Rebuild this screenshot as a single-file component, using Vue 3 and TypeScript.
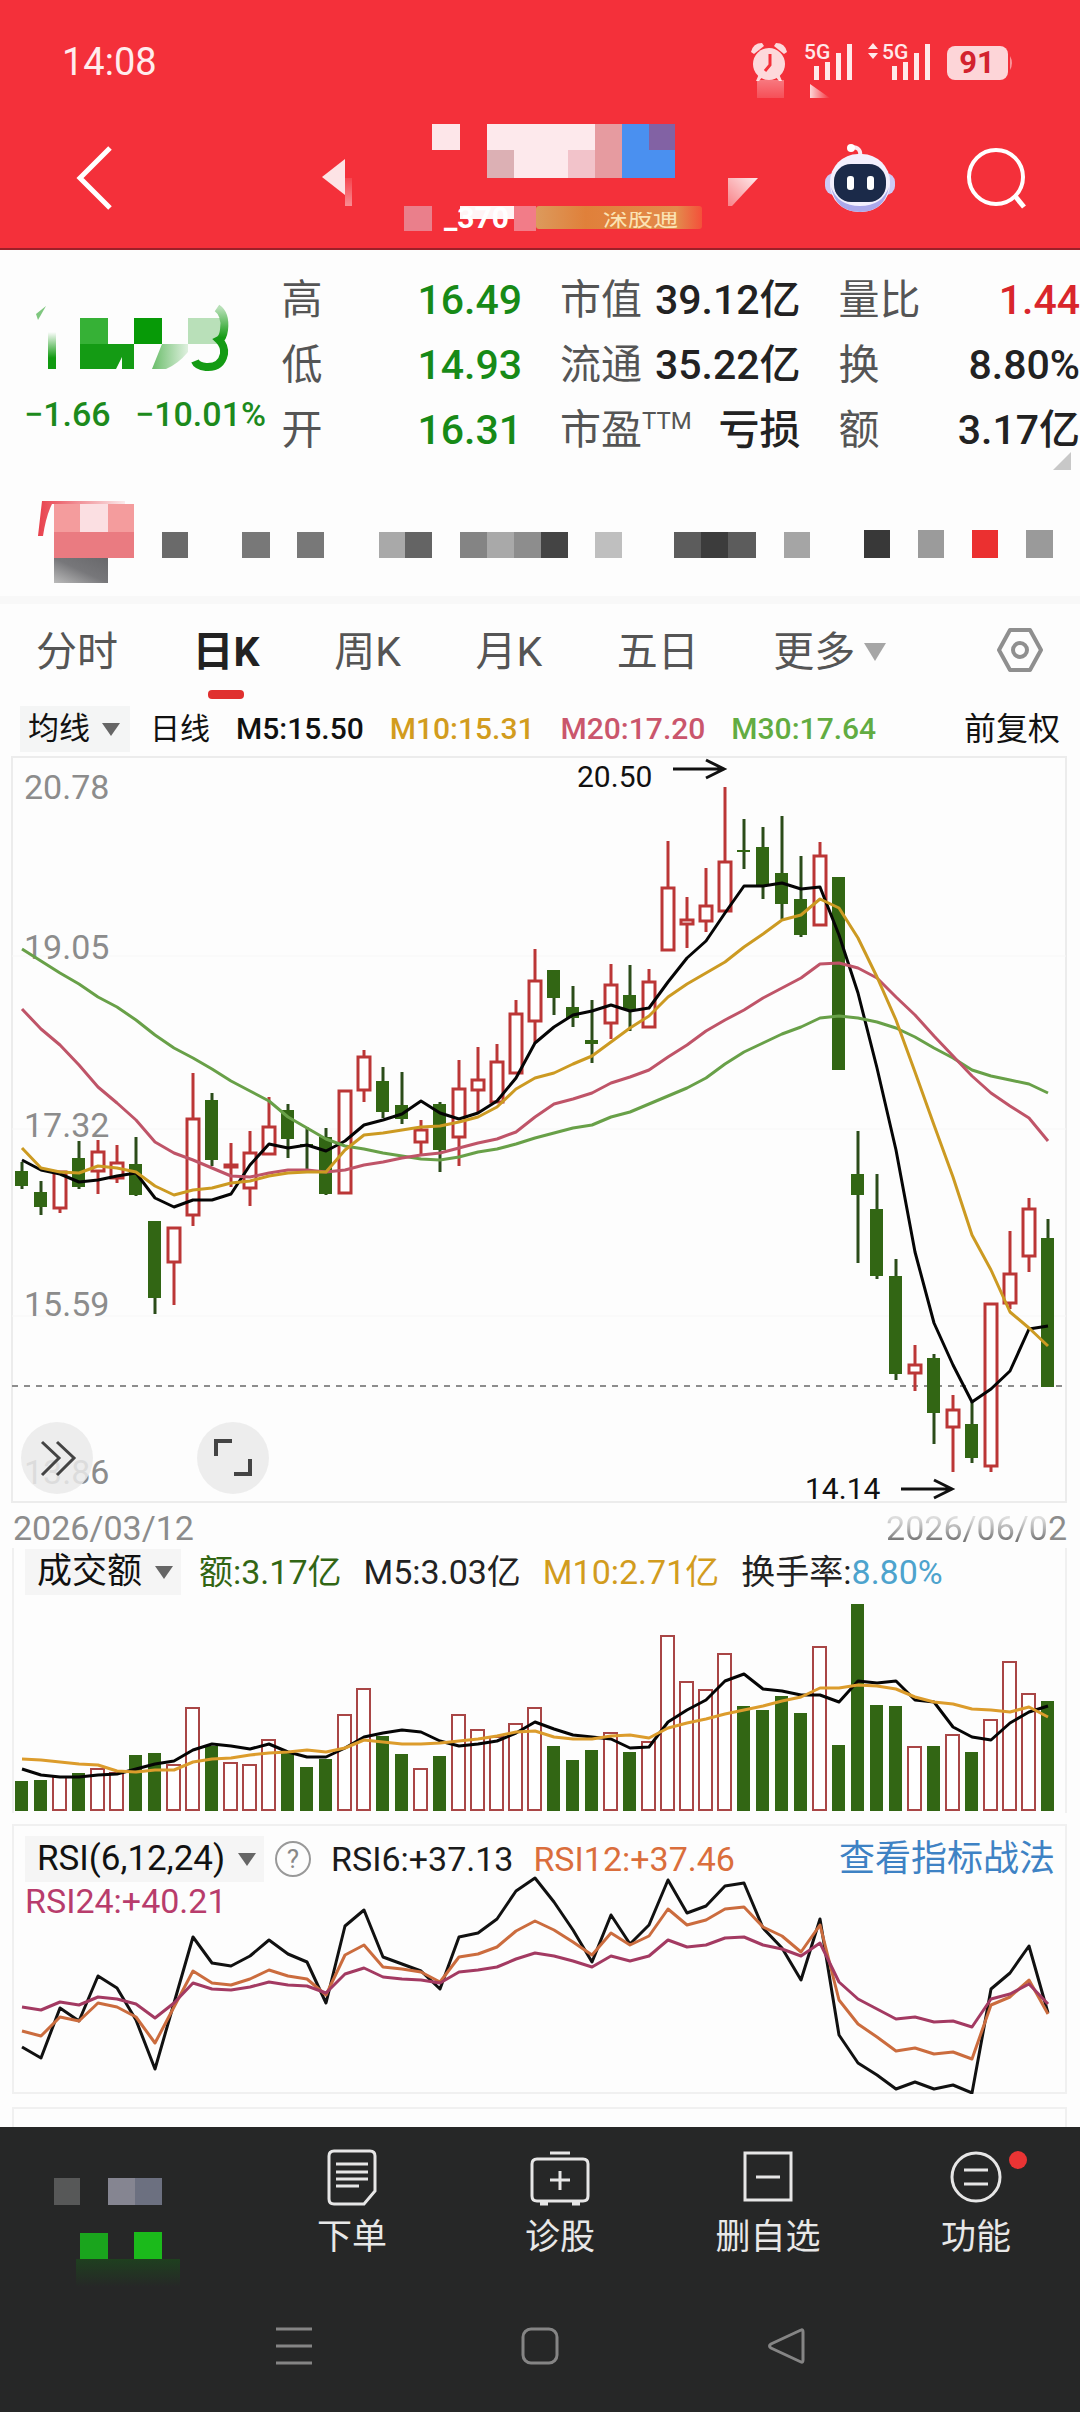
<script setup lang="ts">
import { ref } from 'vue'

type Row = { label: string; sup?: string; value: string; tone: string }
type Block = [x: number, y: number, w: number, h: number, fill: string]
type Candle = [high: number, top: number, bottom: number, low: number, up: 0 | 1]

const groups: Row[][] = [
  [
    { label: '高', value: '16.49', tone: 'down' },
    { label: '低', value: '14.93', tone: 'down' },
    { label: '开', value: '16.31', tone: 'down' },
  ],
  [
    { label: '市值', value: '39.12亿', tone: 'plain' },
    { label: '流通', value: '35.22亿', tone: 'plain' },
    { label: '市盈', sup: 'TTM', value: '亏损', tone: 'plain' },
  ],
  [
    { label: '量比', value: '1.44', tone: 'up' },
    { label: '换', value: '8.80%', tone: 'plain' },
    { label: '额', value: '3.17亿', tone: 'plain' },
  ],
]

const tabs = ['分时', '日K', '周K', '月K', '五日']
const activeTab = ref('日K')

const titleBlocks: Block[] = [
  [110, 6, 28, 26, '#fde6e9'],
  [165, 6, 108, 54, '#fde9ec'],
  [165, 32, 27, 28, '#dcb0b4'],
  [246, 32, 27, 28, '#f2c3ca'],
  [273, 6, 27, 54, '#e69ba0'],
  [300, 6, 53, 54, '#4a90f0'],
  [327, 6, 26, 26, '#8262a4'],
  [82, 88, 28, 25, '#ea7f8b'],
]

const newsBlocks: Block[] = [
  [54, 8, 80, 28, '#f49c9d'],
  [80, 8, 28, 28, '#fbdfe2'],
  [54, 36, 80, 26, '#ea7b81'],
  [162, 36, 26, 26, '#6a6a6a'],
  [242, 36, 28, 26, '#787878'],
  [297, 36, 27, 26, '#787878'],
  [379, 36, 26, 26, '#a9a9a9'],
  [405, 36, 27, 26, '#646464'],
  [460, 36, 27, 26, '#848484'],
  [487, 36, 27, 26, '#a9a9a9'],
  [514, 36, 27, 26, '#8d8d8d'],
  [541, 36, 27, 26, '#444444'],
  [595, 36, 27, 26, '#bfbfbf'],
  [674, 36, 27, 26, '#5c5c5c'],
  [701, 36, 27, 26, '#3c3c3c'],
  [728, 36, 28, 26, '#5c5c5c'],
  [784, 36, 26, 26, '#a5a5a5'],
  [864, 34, 26, 28, '#383838'],
  [918, 34, 26, 28, '#9b9b9b'],
  [972, 34, 26, 28, '#eb3030'],
  [1026, 34, 27, 28, '#9a9a9a'],
]

const candles: Candle[] = [
  [406, 415, 430, 433, 0], [425, 436, 451, 459, 0], [415, 415, 452, 457, 1], [385, 402, 431, 433, 0],
  [384, 395, 415, 438, 1], [389, 406, 422, 427, 1], [381, 408, 439, 440, 0], [465, 465, 542, 558, 0],
  [471, 471, 506, 549, 1], [317, 362, 459, 470, 1], [337, 344, 404, 410, 0], [387, 408, 411, 431, 1],
  [375, 396, 432, 450, 1], [341, 370, 398, 398, 1], [348, 354, 383, 402, 0], [371, 388, 390, 413, 0],
  [372, 381, 438, 439, 0], [334, 334, 437, 437, 1], [294, 300, 334, 346, 1], [311, 325, 356, 362, 0],
  [316, 349, 363, 368, 0], [364, 373, 386, 399, 1], [346, 348, 394, 416, 0], [304, 332, 381, 410, 1],
  [291, 323, 334, 357, 1], [288, 305, 346, 346, 1], [244, 257, 317, 317, 1], [193, 224, 265, 287, 1],
  [214, 214, 242, 259, 0], [230, 251, 262, 271, 0], [244, 284, 288, 307, 0], [208, 228, 267, 283, 1],
  [209, 239, 254, 275, 0], [213, 225, 271, 272, 1], [85, 131, 194, 194, 1], [141, 163, 168, 192, 1],
  [112, 149, 165, 176, 1], [31, 105, 155, 155, 1], [63, 94, 96, 113, 0], [71, 91, 129, 143, 0],
  [60, 117, 148, 163, 0], [100, 143, 179, 181, 0], [86, 99, 169, 169, 1], [121, 121, 314, 314, 0],
  [375, 418, 439, 507, 0], [418, 453, 520, 523, 0], [503, 520, 618, 624, 0], [589, 608, 617, 635, 1],
  [598, 602, 657, 688, 0], [639, 653, 671, 716, 1], [646, 668, 702, 707, 0], [547, 547, 710, 716, 1],
  [475, 517, 547, 553, 1], [442, 452, 500, 516, 1], [463, 482, 631, 631, 0],
]

const ma5 = [404, 414, 418, 426, 424, 420, 417, 442, 451, 444, 444, 438, 409, 388, 392, 389, 395, 385, 369, 364, 358, 345, 357, 363, 357, 345, 322, 287, 271, 259, 255, 249, 255, 252, 226, 202, 185, 157, 130, 130, 127, 133, 131, 179, 237, 312, 394, 496, 567, 609, 646, 633, 615, 573, 570]
const ma10 = [392, 412, 416, 417, 410, 412, 416, 430, 439, 434, 432, 427, 425, 420, 417, 416, 416, 394, 379, 377, 374, 371, 370, 366, 361, 351, 333, 322, 317, 308, 300, 286, 272, 260, 241, 228, 217, 206, 191, 178, 164, 159, 143, 152, 182, 221, 264, 316, 369, 421, 479, 514, 556, 572, 590]
const ma20 = [253, 273, 289, 309, 331, 347, 364, 386, 397, 404, 412, 420, 421, 417, 414, 414, 416, 414, 409, 406, 402, 399, 397, 392, 387, 383, 376, 361, 348, 343, 337, 327, 321, 314, 301, 289, 275, 264, 254, 242, 232, 222, 208, 207, 212, 222, 241, 259, 280, 300, 320, 337, 350, 362, 385]
const ma30 = [193, 205, 217, 228, 241, 251, 264, 279, 292, 302, 313, 325, 335, 345, 361, 372, 383, 390, 393, 397, 400, 403, 404, 401, 396, 393, 388, 382, 377, 372, 369, 361, 356, 348, 340, 332, 322, 308, 296, 287, 278, 271, 262, 260, 262, 266, 272, 281, 292, 302, 314, 320, 324, 328, 337]

const volumes = [181, 180, 177, 173, 169, 173, 155, 153, 165, 108, 146, 163, 165, 140, 153, 167, 159, 115, 89, 136, 154, 169, 156, 115, 130, 137, 124, 108, 146, 160, 150, 133, 152, 142, 36, 82, 90, 54, 106, 110, 96, 113, 47, 145, 4, 105, 106, 147, 146, 135, 152, 120, 62, 94, 101]
const vol5 = [169, 175, 177, 177, 175, 174, 169, 164, 161, 150, 144, 146, 149, 144, 152, 157, 157, 148, 137, 133, 130, 132, 141, 146, 144, 141, 133, 122, 129, 135, 137, 139, 148, 147, 122, 110, 100, 81, 74, 89, 91, 95, 95, 102, 81, 83, 81, 100, 102, 127, 137, 140, 123, 112, 106]
const vol10 = [159, 160, 162, 164, 165, 171, 172, 170, 170, 162, 159, 158, 155, 153, 152, 150, 152, 148, 140, 142, 144, 144, 143, 141, 139, 136, 132, 131, 137, 139, 139, 136, 135, 138, 128, 123, 119, 114, 110, 106, 101, 97, 88, 88, 85, 86, 89, 97, 102, 104, 109, 110, 112, 107, 117]

const rsi6 = [223, 234, 184, 197, 152, 164, 196, 245, 179, 113, 139, 142, 132, 116, 130, 138, 179, 102, 86, 133, 140, 147, 165, 113, 109, 95, 67, 54, 78, 106, 138, 91, 120, 101, 56, 89, 82, 62, 59, 104, 124, 156, 95, 211, 239, 251, 265, 258, 265, 261, 269, 165, 149, 122, 189]
const rsi12 = [207, 212, 193, 197, 179, 183, 193, 219, 183, 147, 159, 161, 155, 146, 152, 155, 171, 131, 121, 143, 145, 148, 158, 133, 130, 123, 107, 97, 106, 118, 131, 109, 121, 112, 85, 101, 96, 85, 83, 103, 112, 128, 101, 176, 200, 213, 227, 224, 230, 228, 235, 181, 173, 156, 190]
const rsi24 = [183, 186, 178, 181, 173, 175, 180, 194, 179, 159, 165, 166, 163, 158, 161, 162, 169, 150, 144, 153, 155, 156, 159, 148, 146, 143, 135, 129, 132, 137, 143, 132, 137, 132, 116, 123, 121, 114, 113, 121, 125, 132, 119, 158, 175, 185, 195, 193, 198, 197, 203, 175, 170, 160, 180]

const axis = [
  { y: 43, text: '20.78' },
  { y: 203, text: '19.05' },
  { y: 381, text: '17.32' },
  { y: 560, text: '15.59' },
  { y: 728, text: '13.86' },
]

const xAt = (i: number): number => 22 + 19 * i
const line = (ys: number[]): string => ys.map((y, i) => `${xAt(i)},${y}`).join(' ')
</script>

<template>
  <div class="app">
    <header class="top">
      <div class="status">
        <span class="clock">14:08</span>
        <svg class="status-icons" viewBox="0 0 264 60" aria-hidden="true">
          <defs>
            <linearGradient id="smear" x1="0" y1="0" x2="0" y2="1">
              <stop offset="0" stop-color="#fff" stop-opacity=".35" />
              <stop offset="1" stop-color="#fff" stop-opacity=".15" />
            </linearGradient>
            <linearGradient id="smearSide" x1="0" y1="0" x2="1" y2="0">
              <stop offset="0" stop-color="#fff" stop-opacity=".8" />
              <stop offset="1" stop-color="#fff" stop-opacity="0" />
            </linearGradient>
          </defs>
          <g fill="#fdd9db">
            <circle cx="19" cy="24" r="16" />
            <path d="M1 12Q3 3 12 3L14 6L4 14ZM37 12Q35 3 26 3L24 6L34 14Z" />
            <path d="M9 34l-3 7h3l4-5zM29 34l3 7h-3l-4-5z" />
          </g>
          <path d="M20 14v11l-5 6" fill="none" stroke="#f4303a" stroke-width="3" />
          <rect x="7" y="40" width="27" height="18" fill="url(#smear)" />
          <path d="M60 44l20 14h-20z" fill="url(#smearSide)" />
          <g fill="#ffe9ea">
            <text class="net" x="54" y="19">5G</text>
            <path d="M64 26h5v14h-5zM75 22h5v18h-5zM86 13h5v27h-5zM97 4h5v36h-5z" />
            <path d="M118 9l5-6 5 6zM118 13l5 6 5-6z" />
            <text class="net" x="132" y="19">5G</text>
            <path d="M142 26h5v14h-5zM153 22h5v18h-5zM164 13h5v27h-5zM175 4h5v36h-5z" />
          </g>
          <rect x="197" y="6" width="61" height="34" rx="8" fill="#fdd5d8" />
          <path d="M260 16q4 7 0 14z" fill="#fdd5d8" opacity=".6" />
          <text class="battery" x="227" y="33">91</text>
        </svg>
      </div>

      <div class="title-row">
        <button class="icon-btn" aria-label="返回">
          <svg width="44" height="72" viewBox="0 0 44 72"><path d="M38 6L8 36L38 66" fill="none" stroke="#fff" stroke-width="5" /></svg>
        </button>
        <div class="stock-name">
          <svg viewBox="0 0 436 120" width="436" height="120" aria-hidden="true">
            <defs>
              <linearGradient id="fadeDown" x1="0" y1="0" x2="0" y2="1">
                <stop offset="0" stop-color="#fff" stop-opacity=".1" />
                <stop offset="1" stop-color="#fff" stop-opacity=".45" />
              </linearGradient>
              <linearGradient id="fadeCorner" x1="1" y1="0" x2="0" y2="1">
                <stop offset="0" stop-color="#fff" stop-opacity=".9" />
                <stop offset="1" stop-color="#fff" stop-opacity=".4" />
              </linearGradient>
              <linearGradient id="tagFill" x1="0" y1="0" x2="1" y2="0">
                <stop offset="0" stop-color="#dc9a5c" />
                <stop offset=".3" stop-color="#e0803a" />
                <stop offset=".85" stop-color="#e38a4c" />
                <stop offset="1" stop-color="#f4503a" />
              </linearGradient>
              <clipPath id="codeClip"><rect x="100" y="88" width="120" height="28" /></clipPath>
              <clipPath id="tagClip"><rect x="270" y="94" width="120" height="20" /></clipPath>
            </defs>
            <path d="M0 59L23 41V77Z" fill="#fde3e5" />
            <rect x="23" y="60" width="7" height="28" fill="url(#fadeDown)" />
            <path d="M406 60H436L410 88H406Z" fill="url(#fadeCorner)" />
            <rect v-for="(b, i) in titleBlocks" :key="i" :x="b[0]" :y="b[1]" :width="b[2]" :height="b[3]" :fill="b[4]" />
            <rect x="214" y="88" width="166" height="23" rx="3" fill="url(#tagFill)" />
            <rect x="138" y="88" width="54" height="13" fill="#fff4f5" />
            <rect x="192" y="88" width="22" height="25" fill="#f27c88" />
            <text class="code" x="122" y="110" clip-path="url(#codeClip)">_370</text>
            <text class="tag" x="281" y="108" clip-path="url(#tagClip)">深股通</text>
          </svg>
        </div>
        <button class="icon-btn robot" aria-label="智能助手">
          <svg width="72" height="70" viewBox="0 0 72 70">
            <path d="M36 14Q38 4 27 4" fill="none" stroke="#fbe9f1" stroke-width="4" stroke-linecap="round" />
            <circle cx="27" cy="5" r="4" fill="#fff" />
            <rect x="1" y="30" width="70" height="22" rx="9" fill="#cdc9f5" />
            <rect x="6" y="11" width="60" height="58" rx="28" fill="#f3f0fd" />
            <path d="M7 44Q12 69 36 69T65 44Q58 63 36 63T7 44" fill="#aaa8ea" />
            <rect x="10" y="21" width="52" height="38" rx="17" fill="#1b2a49" />
            <rect x="23" y="33" width="7" height="14" rx="3" fill="#fff" />
            <rect x="43" y="33" width="7" height="14" rx="3" fill="#fff" />
          </svg>
        </button>
        <button class="icon-btn" aria-label="搜索">
          <svg width="62" height="64" viewBox="0 0 62 64">
            <circle cx="30" cy="31" r="27" fill="none" stroke="#fff" stroke-width="4" />
            <path d="M49 50L58 61" stroke="#fff" stroke-width="5" />
          </svg>
        </button>
      </div>
    </header>

    <section class="quote">
      <div class="price">
        <svg class="price-now" viewBox="0 0 250 72" width="250" height="72" aria-hidden="true">
          <defs>
            <linearGradient id="stem" x1="0" y1="0" x2="0" y2="1">
              <stop offset="0" stop-color="#109a10" stop-opacity="0" />
              <stop offset=".7" stop-color="#109a10" />
            </linearGradient>
            <linearGradient id="pale" x1="0" y1="0" x2="1" y2="0">
              <stop offset="0" stop-color="#6abd6a" />
              <stop offset="1" stop-color="#6abd6a" stop-opacity=".2" />
            </linearGradient>
            <linearGradient id="bowl" x1="0" y1="0" x2="0" y2="1">
              <stop offset="0" stop-color="#149b14" stop-opacity=".3" />
              <stop offset=".5" stop-color="#149b14" />
            </linearGradient>
          </defs>
          <path d="M36 12l10-8-8 14z" fill="#7fc77f" />
          <rect x="48" y="30" width="8" height="37" fill="url(#stem)" />
          <rect x="80" y="16" width="28" height="26" fill="#36b136" />
          <rect x="134" y="16" width="28" height="26" fill="#079a07" />
          <path d="M80 42h54v25h-12v-12l-6 12h-36z" fill="#149b14" />
          <path d="M162 42h26v8q-10 12-22 17h-14z" fill="url(#pale)" />
          <path d="M188 16h32v26h-32z" fill="#b9e0b9" />
          <path d="M217 6q9 6 7 22q-1 8-5 10q6 6 5 14q-3 14-18 13q-9-1-11-6" fill="none" stroke="url(#bowl)" stroke-width="8" />
        </svg>
        <p class="change"><span>−1.66</span><span>−10.01%</span></p>
      </div>
      <dl v-for="(g, gi) in groups" :key="gi" class="stats">
        <div v-for="r in g" :key="r.label">
          <dt>{{ r.label }}<sup v-if="r.sup">{{ r.sup }}</sup></dt>
          <dd :class="r.tone">{{ r.value }}</dd>
        </div>
      </dl>
      <svg class="corner" width="18" height="18" viewBox="0 0 18 18" aria-hidden="true"><path d="M18 0V18H0Z" fill="#c8c8c8" /></svg>
    </section>

    <svg class="news" viewBox="0 0 1080 100" aria-hidden="true">
      <defs>
        <linearGradient id="grayTag" x1="0" y1="1" x2="1" y2="0">
          <stop offset="0" stop-color="#bbb" />
          <stop offset=".5" stop-color="#77777a" />
          <stop offset="1" stop-color="#68686b" />
        </linearGradient>
        <linearGradient id="redEdge" x1="0" y1="0" x2="1" y2="0">
          <stop offset="0" stop-color="#e8404c" />
          <stop offset="1" stop-color="#e8404c" stop-opacity=".1" />
        </linearGradient>
      </defs>
      <path d="M42 5H125V8H52Q46 20 43 40H38Z" fill="url(#redEdge)" />
      <rect v-for="(b, i) in newsBlocks" :key="i" :x="b[0]" :y="b[1]" :width="b[2]" :height="b[3]" :fill="b[4]" />
      <rect x="54" y="62" width="54" height="25" fill="url(#grayTag)" />
    </svg>

    <nav class="tabs">
      <button v-for="t in tabs" :key="t" :class="{ active: t === activeTab }" @click="activeTab = t">{{ t }}</button>
      <button class="more">更多<svg width="24" height="18" viewBox="0 0 24 18" aria-hidden="true"><path d="M1 0H23L12 18Z" fill="#a6a6a6" /></svg></button>
      <button class="settings" aria-label="设置">
        <svg width="48" height="48" viewBox="0 0 48 48"><g fill="none" stroke="#8f8f8f" stroke-width="4"><path d="M14 4H34L45 24L34 44H14L3 24Z" stroke-linejoin="round" /><circle cx="24" cy="24" r="7" /></g></svg>
      </button>
    </nav>

    <div class="legend">
      <label class="pick">
        <select aria-label="主图指标"><option>均线</option></select>
        <svg width="18" height="13" viewBox="0 0 18 13" aria-hidden="true"><path d="M0 0H18L9 13Z" /></svg>
      </label>
      <span class="period">日线</span>
      <span class="m5">M5:15.50</span>
      <span class="m10">M10:15.31</span>
      <span class="m20">M20:17.20</span>
      <span class="m30">M30:17.64</span>
      <a href="#" class="adjust">前复权</a>
    </div>

    <section class="kline">
      <svg viewBox="0 0 1080 756" aria-label="日K线图" role="img">
        <path d="M12 1H1066V746H12Z" fill="none" stroke="#ececec" stroke-width="2" />
        <path d="M12 200H1066M12 373H1066M12 560H1066" stroke="#f7f7f7" stroke-width="1" />
        <text v-for="a in axis" :key="a.text" class="axis" x="24" :y="a.y">{{ a.text }}</text>
        <path d="M12 630H1066" stroke="#8d8d8d" stroke-width="2" stroke-dasharray="6 6" />
        <g v-for="(c, i) in candles" :key="i">
          <template v-if="c[4]">
            <path :d="`M${xAt(i)} ${c[0]}V${c[1]}M${xAt(i)} ${c[2]}V${c[3]}`" stroke="#bb3636" stroke-width="3" />
            <rect :x="xAt(i) - 6" :y="c[1] + 1" width="12" :height="c[2] - c[1] - 1" fill="#fff" stroke="#bb3636" stroke-width="3" />
          </template>
          <template v-else>
            <path :d="`M${xAt(i)} ${c[0]}V${c[3]}`" stroke="#2b4c1a" stroke-width="3" />
            <rect :x="xAt(i) - 7" :y="c[1]" width="13" :height="c[2] - c[1]" fill="#326614" />
          </template>
        </g>
        <g class="lines">
          <polyline :points="line(ma5)" stroke="#050505" />
          <polyline :points="line(ma30)" stroke="#68a048" />
          <polyline :points="line(ma20)" stroke="#bf5468" />
          <polyline :points="line(ma10)" stroke="#cc9a22" />
        </g>
        <text class="mark" x="577" y="31">20.50</text>
        <text class="mark" x="805" y="743">14.14</text>
        <path d="M673 13H723M706 4L724 13L706 22M901 733H951M934 724L952 733L934 742" fill="none" stroke="#111" stroke-width="3" />
      </svg>
      <div class="tools">
        <button aria-label="展开">
          <svg width="72" height="72" viewBox="0 0 72 72"><path d="M21 20L38 36L21 53M36 20L53 36L36 53" fill="none" stroke="#444" stroke-width="3" /></svg>
        </button>
        <button aria-label="全屏">
          <svg width="72" height="72" viewBox="0 0 72 72"><path d="M19 34V19H35M37 52H53V37" fill="none" stroke="#444" stroke-width="4" /></svg>
        </button>
      </div>
    </section>

    <div class="dates">
      <time>2026/03/12</time>
      <time><span class="washed">2026/06/0</span>2</time>
    </div>

    <section class="panel turnover">
      <div class="panel-head">
        <label class="pick">
          <select aria-label="副图指标"><option>成交额</option></select>
          <svg width="18" height="13" viewBox="0 0 18 13" aria-hidden="true"><path d="M0 0H18L9 13Z" /></svg>
        </label>
        <span class="amount">额:3.17亿</span>
        <span class="m5">M5:3.03亿</span>
        <span class="m10">M10:2.71亿</span>
        <span>换手率:<b>8.80%</b></span>
      </div>
      <svg viewBox="0 0 1080 213" role="img" aria-label="成交额">
        <template v-for="(v, i) in volumes" :key="i">
          <rect v-if="candles[i][4]" :x="xAt(i) - 7" :y="v" width="13" :height="210 - v" fill="#fff" stroke="#a94646" stroke-width="2" />
          <rect v-else :x="xAt(i) - 7" :y="v" width="13" :height="211 - v" fill="#326614" />
        </template>
        <g class="lines">
          <polyline :points="line(vol5)" stroke="#050505" />
          <polyline :points="line(vol10)" stroke="#dc9c2c" />
        </g>
      </svg>
    </section>

    <section class="panel rsi">
      <svg viewBox="0 0 1080 270" role="img" aria-label="RSI">
        <g class="lines">
          <polyline :points="line(rsi6)" stroke="#111" />
          <polyline :points="line(rsi12)" stroke="#cb6c3e" />
          <polyline :points="line(rsi24)" stroke="#a33a62" />
        </g>
      </svg>
      <div class="rsi-head">
        <div class="panel-head">
          <label class="pick">
            <select aria-label="RSI参数"><option>RSI(6,12,24)</option></select>
            <svg width="18" height="13" viewBox="0 0 18 13" aria-hidden="true"><path d="M0 0H18L9 13Z" /></svg>
          </label>
          <button class="help" aria-label="说明">?</button>
          <span class="r6">RSI6:+37.13</span>
          <span class="r12">RSI12:+37.46</span>
          <a href="#">查看指标战法</a>
        </div>
        <p class="r24">RSI24:+40.21</p>
      </div>
    </section>
    <div class="next-panel"></div>

    <footer>
      <div class="actions">
        <svg class="index" viewBox="0 0 248 160" aria-hidden="true">
          <defs>
            <linearGradient id="glow" x1="0" y1="0" x2="0" y2="1">
              <stop offset="0" stop-color="#1a501a" stop-opacity=".6" />
              <stop offset="1" stop-color="#1a501a" stop-opacity="0" />
            </linearGradient>
          </defs>
          <rect x="54" y="51" width="26" height="27" fill="#575858" />
          <rect x="108" y="51" width="27" height="27" fill="#858591" />
          <rect x="135" y="51" width="27" height="27" fill="#6c7080" />
          <rect x="80" y="106" width="28" height="26" fill="#1aa51d" />
          <rect x="134" y="105" width="28" height="27" fill="#1bba1b" />
          <rect x="76" y="132" width="104" height="28" fill="url(#glow)" />
        </svg>
        <button>
          <svg width="60" height="60" viewBox="0 0 60 60"><path d="M12 4H48Q53 4 53 9V44L42 57H12Q7 57 7 52V9Q7 4 12 4ZM14 17H46M14 25H46M14 32H46M14 39H37" /></svg>
          下单
        </button>
        <button>
          <svg width="60" height="60" viewBox="0 0 60 60"><path d="M7 12H53Q58 12 58 17V49Q58 54 53 54H7Q2 54 2 49V17Q2 12 7 12ZM20 6H40M30 24V43M20 33H40M10 57H18M42 57H50" /></svg>
          诊股
        </button>
        <button>
          <svg width="60" height="60" viewBox="0 0 60 60"><path d="M7 6H53V53H7ZM18 30H42" /></svg>
          删自选
        </button>
        <button>
          <svg width="60" height="60" viewBox="0 0 60 60"><circle cx="30" cy="30" r="24" /><path d="M18 23H42M18 37H42" /></svg>
          功能
          <i class="dot"></i>
        </button>
      </div>
      <div class="system">
        <button aria-label="最近任务"><svg width="38" height="40" viewBox="0 0 38 40"><path d="M1 3H37M1 20H37M1 37H37" /></svg></button>
        <button aria-label="主页"><svg width="38" height="40" viewBox="0 0 38 40"><rect x="2" y="3" width="34" height="34" rx="8" /></svg></button>
        <button aria-label="返回"><svg width="38" height="40" viewBox="0 0 38 40"><path d="M34 4Q36 3 36 6V34Q36 37 34 36L4 22Q1 20 4 18Z" /></svg></button>
      </div>
    </footer>
  </div>
</template>

<style>
body {
  margin: 0;
}
</style>

<style scoped>
.app {
  font-family: Roboto, "Noto Sans CJK SC", sans-serif;
  background: #fdfdfd;
  color: #222;
  overflow: hidden;
}
button,
select {
  font: inherit;
  color: inherit;
  background: none;
  border: 0;
  padding: 0;
  margin: 0;
}
select {
  appearance: none;
}
a {
  color: inherit;
  text-decoration: none;
}
svg {
  display: block;
}
p,
dl,
dd {
  margin: 0;
}

.top {
  background: #f4303a;
  border-bottom: 2px solid #9c2029;
}
.status {
  display: flex;
  justify-content: space-between;
  align-items: flex-start;
  padding: 40px 66px 0 62px;
  height: 78px;
}
.clock {
  color: #ffeced;
  font-size: 38px;
  line-height: 44px;
}
.status-icons {
  width: 264px;
  height: 60px;
}
.net {
  font-size: 21px;
  font-weight: 500;
}
.battery {
  font-size: 31px;
  font-weight: 700;
  text-anchor: middle;
  fill: #d3222e;
}
.title-row {
  display: flex;
  align-items: center;
  padding: 0 52px 10px 72px;
}
.icon-btn {
  flex: none;
}
.stock-name {
  margin-left: auto;
}
.robot {
  margin: 0 70px 0 66px;
}
.code {
  font-size: 30px;
  font-weight: 700;
  fill: #fff;
}
.tag {
  font-size: 25px;
  fill: #fbe3b4;
}

.quote {
  position: relative;
  display: grid;
  grid-template-columns: minmax(0, 243fr) 240fr 240fr 241fr;
  column-gap: 38px;
  padding: 18px 0 0;
  height: 204px;
}
.price {
  padding-top: 34px;
}
.change {
  display: flex;
  justify-content: space-between;
  width: 242px;
  padding-left: 24px;
  font-size: 34px;
  line-height: 40px;
  margin-top: 20px;
  color: #1c8a1c;
  font-weight: 500;
  white-space: nowrap;
}
.stats > div {
  display: flex;
  justify-content: space-between;
  align-items: baseline;
  height: 65px;
  font-size: 41px;
  line-height: 65px;
  white-space: nowrap;
}
.stats dt {
  color: #555;
}
.stats dd {
  font-weight: 500;
}
.stats sup {
  font-size: 24px;
  line-height: 0;
}
.down {
  color: #178a17;
}
.up {
  color: #d9262b;
}
.corner {
  position: absolute;
  right: 9px;
  bottom: 2px;
}
.news {
  width: 100%;
  margin-top: 24px;
  border-bottom: 8px solid #f8f8f8;
}

.tabs {
  display: flex;
  justify-content: space-between;
  align-items: flex-start;
  padding: 22px 36px 0;
  height: 76px;
  font-size: 41px;
  line-height: 52px;
  color: #555;
}
.tabs button {
  position: relative;
}
.tabs .active {
  font-weight: 700;
  color: #222;
}
.tabs .active::after {
  content: "";
  position: absolute;
  left: 50%;
  bottom: -21px;
  width: 36px;
  height: 9px;
  margin-left: -18px;
  border-radius: 4px;
  background: #e0302f;
}
.more {
  display: flex;
  align-items: center;
  gap: 8px;
}
.settings {
  margin-left: 34px;
}

.legend {
  display: flex;
  align-items: center;
  height: 54px;
  padding: 0 20px;
  gap: 26px;
  font-size: 30px;
  line-height: 48px;
  font-weight: 500;
  color: #111;
}
.pick {
  display: flex;
  align-items: center;
  gap: 12px;
  height: 46px;
  padding: 0 10px 0 8px;
  background: #f4f5f5;
  fill: #666;
}
.legend .pick {
  font-weight: 400;
  font-size: 31px;
  margin-right: -6px;
}
.period,
.adjust {
  font-weight: 400;
}
.adjust {
  margin-left: auto;
  font-size: 32px;
}
.m10 {
  color: #d29c1e;
}
.m20 {
  color: #ca566c;
}
.m30 {
  color: #62ac42;
}

.kline {
  position: relative;
}
.kline > svg,
.panel > svg {
  width: 100%;
}
.lines {
  fill: none;
  stroke-width: 3;
  stroke-linejoin: round;
}
.axis {
  font-size: 34px;
  fill: #8c8c8c;
}
.mark {
  font-size: 30px;
  fill: #111;
}
.tools {
  position: absolute;
  left: 21px;
  bottom: 18px;
  display: flex;
  gap: 104px;
}
.tools button {
  border-radius: 50%;
  background: rgba(234, 234, 234, 0.85);
}

.dates {
  display: flex;
  justify-content: space-between;
  padding: 0 13px;
  height: 36px;
  font-size: 34px;
  line-height: 32px;
  color: #8c8c8c;
}
.washed {
  background: linear-gradient(#ddd 25%, #b4b4b4 50%, #777 80%);
  background-clip: text;
  color: transparent;
}

.panel {
  position: relative;
}
.panel::before {
  content: "";
  position: absolute;
  inset: 0 13px 0 12px;
  border: solid #f0f0f0;
  border-width: 0 2px;
  pointer-events: none;
}
.panel-head {
  display: flex;
  align-items: center;
  height: 48px;
  font-size: 34px;
  line-height: 46px;
  gap: 22px;
  white-space: nowrap;
}
.panel-head .pick {
  font-size: 35px;
  padding: 0 8px 0 12px;
  background: #f5f5f5;
  color: #111;
}
.turnover .panel-head {
  padding: 0 25px;
}
.turnover > svg {
  position: relative;
  margin-top: 4px;
}
.turnover .panel-head .pick {
  margin-right: -4px;
}
.turnover b {
  font-weight: 400;
  color: #4da3cd;
}
.amount {
  color: #326614;
}

.rsi {
  margin-top: 11px;
}
.rsi > svg {
  position: relative;
}
.rsi::before {
  border-width: 2px;
}
.rsi-head {
  position: absolute;
  inset: 11px 25px auto;
}
.rsi-head .panel-head {
  gap: 20px;
}
.rsi-head a {
  margin-left: auto;
  font-size: 36px;
  color: #3e82c4;
}
.help {
  box-sizing: border-box;
  width: 36px;
  height: 36px;
  border: 2px solid #999;
  border-radius: 50%;
  font-size: 26px;
  line-height: 30px;
  color: #888;
  margin-left: -9px;
}
.r6 {
  color: #1b1b1b;
}
.r12 {
  color: #da6e3c;
}
.r24 {
  font-size: 34px;
  line-height: 36px;
  color: #b83c6c;
}
.next-panel {
  height: 18px;
  margin: 13px 13px 0 12px;
  border: solid #f0f0f0;
  border-width: 2px 2px 0;
}

footer {
  background: #262727;
  color: #e8e8e8;
}
.actions {
  display: grid;
  grid-template-columns: 248fr 208fr 208fr 208fr 208fr;
}
.index {
  width: 100%;
}
.actions button {
  position: relative;
  display: flex;
  flex-direction: column;
  align-items: center;
  gap: 3px;
  padding-top: 20px;
  font-size: 35px;
  line-height: 56px;
}
.actions button svg {
  fill: none;
  stroke: #e6e6e6;
  stroke-width: 3;
}
.dot {
  position: absolute;
  top: 24px;
  left: 50%;
  width: 18px;
  height: 18px;
  margin-left: 33px;
  border-radius: 50%;
  background: #e93434;
}
.system {
  display: flex;
  justify-content: center;
  gap: 208px;
  padding: 39px 0 48px;
}
.system svg {
  fill: none;
  stroke: #858585;
  stroke-width: 3;
}
</style>
